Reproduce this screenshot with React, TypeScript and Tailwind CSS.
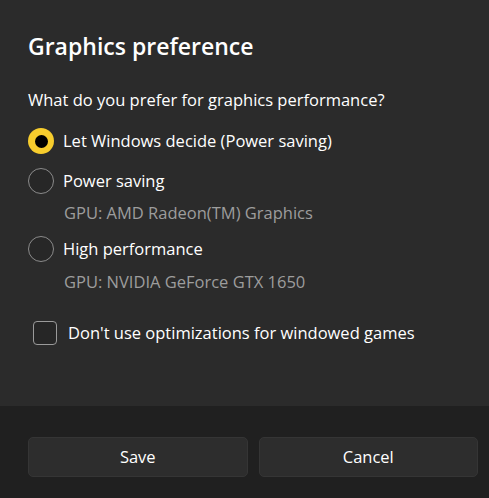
import React from "react";

const font = { fontFamily: '"Segoe UI", "Open Sans", "Noto Sans", sans-serif' };

function Radio({ checked }: { checked?: boolean }) {
  if (checked) {
    return (
      <span className="flex h-[26px] w-[26px] shrink-0 items-center justify-center rounded-full bg-[#f7cd2d]">
        <span className="h-[13px] w-[13px] rounded-full bg-black" />
      </span>
    );
  }
  return (
    <span className="h-[26px] w-[26px] shrink-0 rounded-full border-[1.5px] border-[#8b8b8b] bg-[#272727]" />
  );
}

export default function App() {
  return (
    <div
      className="flex h-[498px] w-[489px] flex-col overflow-hidden bg-[#2b2b2b] text-white antialiased"
      style={font}
    >
      <div className="flex flex-1 flex-col pl-[28px] pt-[30px]">
        <h1 className="h-[32px] text-[23px] font-semibold leading-[32px]">Graphics preference</h1>

        <p className="mt-[26px] h-[24px] text-[16.5px] leading-[24px]">
          What do you prefer for graphics performance?
        </p>

        <label className="mt-[13px] flex h-[32px] items-center gap-[9px]">
          <Radio checked />
          <span className="text-[16.5px]">Let Windows decide (Power saving)</span>
        </label>

        <label className="mt-[8px] flex h-[32px] items-center gap-[9px]">
          <Radio />
          <span className="text-[16.5px]">Power saving</span>
        </label>
        <p className="mt-[4px] h-[24px] pl-[36px] text-[16.5px] leading-[24px] text-[#9d9d9d]">
          GPU: AMD Radeon(TM) Graphics
        </p>

        <label className="mt-[8px] flex h-[32px] items-center gap-[9px]">
          <Radio />
          <span className="text-[16.5px]">High performance</span>
        </label>
        <p className="mt-[5px] h-[24px] pl-[36px] text-[16.5px] leading-[24px] text-[#9d9d9d]">
          GPU: NVIDIA GeForce GTX 1650
        </p>

        <label className="mt-[23px] flex h-[32px] items-center gap-[11px] pl-[5px]">
          <span className="h-[24px] w-[24px] shrink-0 rounded-[4px] border-[1.5px] border-[#9a9a9a] bg-[#262626]" />
          <span className="text-[16.5px]">Don't use optimizations for windowed games</span>
        </label>
      </div>

      <div className="flex h-[92px] gap-[11px] bg-[#202020] pl-[28px] pr-[11px] pt-[31px]">
        <button className="h-[40px] flex-1 rounded-[5px] border border-[#353535] bg-[#2d2d2d] text-[16.5px] text-white">
          Save
        </button>
        <button className="h-[40px] flex-1 rounded-[5px] border border-[#353535] bg-[#2d2d2d] text-[16.5px] text-white">
          Cancel
        </button>
      </div>
    </div>
  );
}
